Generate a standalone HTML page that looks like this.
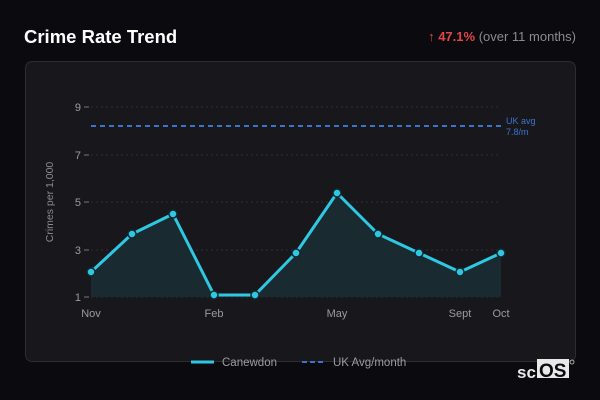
<!DOCTYPE html>
<html><head><style>
body{margin:0;width:600px;height:400px;background:#0b0b0f;font-family:"Liberation Sans",sans-serif;overflow:hidden;position:relative}
.t{position:absolute;left:24px;top:26px;color:#fff;font-size:18.5px;font-weight:bold;font-family:"Liberation Sans",sans-serif}
.r{position:absolute;right:24px;top:29px;font-size:13px;color:#8a8a90;font-family:"Liberation Sans",sans-serif}
.r b{color:#e0454a}
.card{position:absolute;left:25px;top:61px;width:549px;height:299px;background:#18181c;border:1px solid #2c2c31;border-radius:7px}
svg{position:absolute;left:0;top:0}
</style></head><body>
<div class="t">Crime Rate Trend</div>
<div class="r"><b>↑ 47.1%</b> (over 11 months)</div>
<div class="card"></div>
<svg width="600" height="400" font-family="Liberation Sans,sans-serif">
<g stroke="#2e2e33" stroke-dasharray="2,3" stroke-width="1">
<line x1="91" y1="107" x2="501" y2="107"/><line x1="91" y1="155" x2="501" y2="155"/><line x1="91" y1="202" x2="501" y2="202"/><line x1="91" y1="250" x2="501" y2="250"/><line x1="91" y1="297" x2="501" y2="297"/>
</g>
<g stroke="#777" stroke-width="1"><line x1="84" y1="107" x2="89" y2="107"/><line x1="84" y1="155" x2="89" y2="155"/><line x1="84" y1="202" x2="89" y2="202"/><line x1="84" y1="250" x2="89" y2="250"/><line x1="84" y1="297" x2="89" y2="297"/></g>
<g fill="#9a9aa0" font-size="11" text-anchor="end"><text x="81" y="111">9</text><text x="81" y="159">7</text><text x="81" y="206">5</text><text x="81" y="254">3</text><text x="81" y="301">1</text></g>
<text transform="translate(53,202) rotate(-90)" fill="#8a8a90" font-size="10.5" text-anchor="middle">Crimes per 1,000</text>
<line x1="91" y1="126" x2="501" y2="126" stroke="#3b74d0" stroke-width="2" stroke-dasharray="5,4"/>
<text x="506" y="124" fill="#3b74d0" font-size="9">UK avg</text><text x="506" y="135" fill="#3b74d0" font-size="9">7.8/m</text>
<path d="M91 272L132 234L173 214L214 295L255 295L296 253L337 193L378 234L419 253L460 272L501 253L501 297L91 297Z" fill="#1a2a31"/>
<path d="M91 272L132 234L173 214L214 295L255 295L296 253L337 193L378 234L419 253L460 272L501 253" fill="none" stroke="#2ec8e2" stroke-width="3" stroke-linejoin="round"/>
<g fill="#2ec8e2" stroke="#0f2a30" stroke-width="1.5">
<circle cx="91" cy="272" r="4"/><circle cx="132" cy="234" r="4"/><circle cx="173" cy="214" r="4"/><circle cx="214" cy="295" r="4"/><circle cx="255" cy="295" r="4"/><circle cx="296" cy="253" r="4"/><circle cx="337" cy="193" r="4"/><circle cx="378" cy="234" r="4"/><circle cx="419" cy="253" r="4"/><circle cx="460" cy="272" r="4"/><circle cx="501" cy="253" r="4"/>
</g>
<g fill="#9a9aa0" font-size="11" text-anchor="middle"><text x="91" y="317">Nov</text><text x="214" y="317">Feb</text><text x="337" y="317">May</text><text x="460" y="317">Sept</text><text x="501" y="317">Oct</text></g>
<line x1="191" y1="362" x2="214" y2="362" stroke="#2ec8e2" stroke-width="3"/>
<text x="222" y="366" fill="#9a9aa0" font-size="11.5">Canewdon</text>
<line x1="302" y1="362" x2="326" y2="362" stroke="#3b74d0" stroke-width="2" stroke-dasharray="5,3"/>
<text x="333" y="366" fill="#9a9aa0" font-size="11.5">UK Avg/month</text>
<text x="517" y="378" fill="#e8e8e8" font-size="17" font-weight="bold">sc</text>
<rect x="537" y="359" width="32" height="19" fill="#e8e8e8"/>
<text x="539" y="377" fill="#0b0b0f" font-size="19" font-weight="bold">OS</text>
<circle cx="572" cy="362" r="2" fill="none" stroke="#ccc" stroke-width="0.8"/>
</svg>
</body></html>
